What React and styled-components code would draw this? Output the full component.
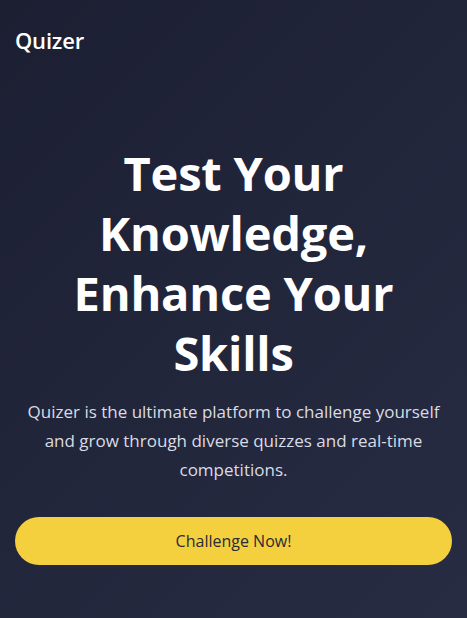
import React from 'react';
import styled, { createGlobalStyle } from 'styled-components';

const GlobalStyle = createGlobalStyle`
  html, body {
    margin: 0;
    padding: 0;
    height: 100%;
  }
  body {
    font-family: 'Open Sans', 'Noto Sans', sans-serif;
    background: #1f2236;
  }
  #root {
    min-height: 100%;
  }
`;

const Page = styled.div`
  min-height: 618px;
  box-sizing: border-box;
  display: flex;
  flex-direction: column;
  background: linear-gradient(135deg, #1c1f32 0%, #22263b 50%, #272c43 100%);
  color: #fff;
`;

const Header = styled.header`
  display: flex;
  align-items: center;
  padding: 25px 15px 0;
  height: 30px;
`;

const Logo = styled.div`
  font-size: 22px;
  font-weight: 600;
  letter-spacing: -0.2px;
  color: #fff;
`;

const Hero = styled.section`
  display: flex;
  flex-direction: column;
  align-items: center;
  text-align: center;
  padding: 88px 15px 0;
`;

const Title = styled.h1`
  margin: 0;
  padding: 0 20px;
  font-size: 47px;
  font-weight: 700;
  line-height: 60px;
  letter-spacing: -0.2px;
  color: #fff;
`;

const Lead = styled.p`
  margin: 14px 0 0;
  font-size: 17px;
  line-height: 29px;
  color: #d9dce4;
`;

const CallButton = styled.button`
  margin-top: 33px;
  width: 100%;
  height: 48px;
  border: none;
  border-radius: 24px;
  background: #f4d03f;
  color: #2b2a37;
  font-family: inherit;
  font-size: 16px;
  cursor: pointer;
`;

export default function App() {
  return (
    <>
      <GlobalStyle />
      <Page>
        <Header>
          <Logo>Quizer</Logo>
        </Header>
        <Hero>
          <Title>Test Your Knowledge, Enhance Your Skills</Title>
          <Lead>
            Quizer is the ultimate platform to challenge yourself and grow
            through diverse quizzes and real-time competitions.
          </Lead>
          <CallButton>Challenge Now!</CallButton>
        </Hero>
      </Page>
    </>
  );
}
